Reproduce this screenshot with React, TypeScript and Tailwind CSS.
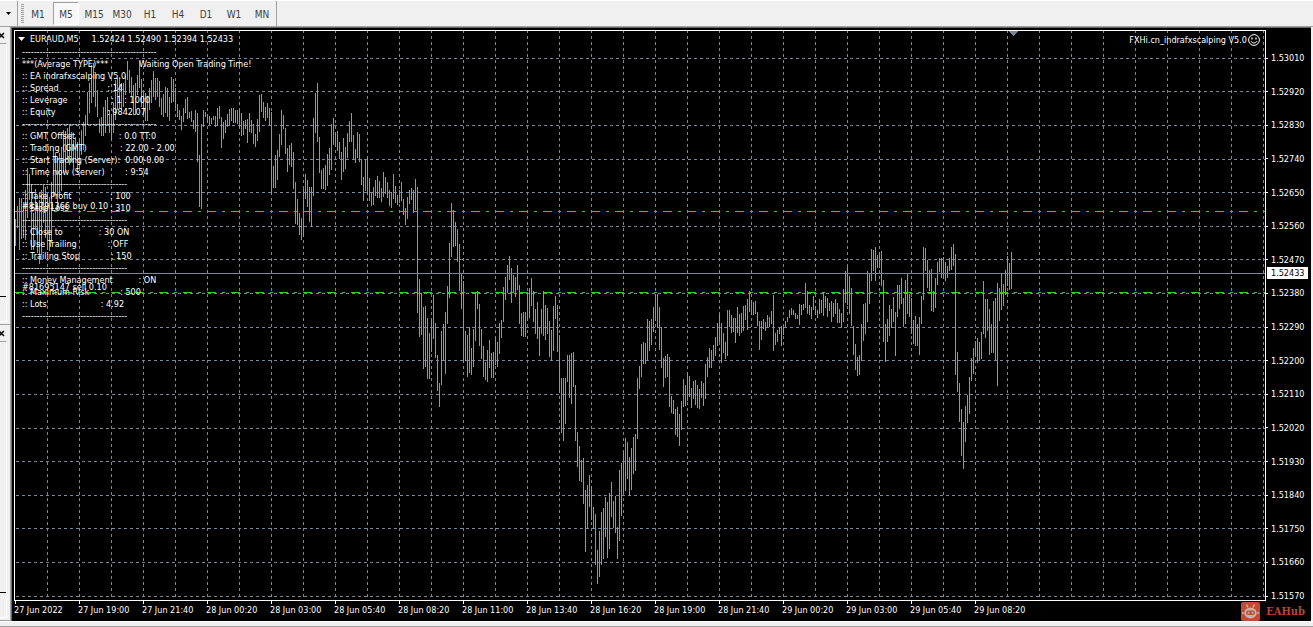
import React from 'react';

const TIMEFRAMES = ['M1', 'M5', 'M15', 'M30', 'H1', 'H4', 'D1', 'W1', 'MN'];

const PRICES = [
  '1.53010', '1.52920', '1.52830', '1.52740', '1.52650', '1.52560', '1.52470', '1.52380', '1.52290',
  '1.52200', '1.52110', '1.52020', '1.51930', '1.51840', '1.51750', '1.51660', '1.51570',
];

const TIMES = [
  '27 Jun 2022', '27 Jun 19:00', '27 Jun 21:40', '28 Jun 00:20', '28 Jun 03:00', '28 Jun 05:40',
  '28 Jun 08:20', '28 Jun 11:00', '28 Jun 13:40', '28 Jun 16:20', '28 Jun 19:00', '28 Jun 21:40',
  '29 Jun 00:20', '29 Jun 03:00', '29 Jun 05:40', '29 Jun 08:20',
];

const LONG_RULE = '-'.repeat(46);
const SHORT_RULE = '-'.repeat(36);

const COMMENT = [
  LONG_RULE,
  '***(Average TYPE)***            Waiting Open Trading Time!',
  ':: EA indrafxscalping V5.0',
  ':: Spread                   : 14',
  ':: Leverage                 : 1 : 1000',
  ':: Equity                    : 9842.07',
  LONG_RULE,
  ':: GMT Offset                 : 0.0 TT:0',
  ':: Trading (GMT)             : 22.00 - 2.00',
  ':: Start Trading (Server):  0.00-0.00',
  ':: Time now (Server)        : 9:54',
  SHORT_RULE,
  ':: Take Profit               : 100',
  ':: Stop Loss                : 310',
  SHORT_RULE,
  ':: Close to              : 30 ON',
  ':: Use Trailing            : OFF',
  ':: Trailing Stop            : 150',
  SHORT_RULE,
  ':: Money Management          : ON',
  ':: Maximum Risk            : 500',
  ':: Lots                     : 4.92',
  SHORT_RULE,
];

// high/low of every bar, one bar each two pixels
const BARS = `
219-246 206-228 198-250 198-239 202-238 190-240 168-218 174-200 184-250 213-250 189-230 203-253 200-264 190-255
185-223 187-238 193-250 197-251 182-243 150-196 153-195 157-210 153-196 147-191 130-173 131-170 128-160 125-165
132-162 140-168 137-160 142-173 138-168 130-155 122-150 115-136 92-125 83-113 65-103 63-97 72-107 90-117
119-133 117-136 107-136 100-133 97-125 110-133 115-141 103-133 80-120 78-110 77-108 83-110 83-107 75-95
61-80 70-93 77-96 85-115 83-115 75-95 61-88 79-107 90-115 93-121 97-121 88-110 80-103 71-97
78-100 78-97 81-107 98-115 94-117 87-113 88-117 97-121 77-103 79-102 88-108 104-117 110-120 116-130
108-122 99-113 97-119 112-118 111-122 120-129 110-132 113-162 155-207 124-209 110-127 112-117 114-123 116-125
118-124 116-120 116-127 108-126 106-119 117-148 122-139 120-133 114-127 109-126 108-121 108-123 110-123 110-124
109-128 113-136 121-135 120-129 119-143 113-132 120-133 124-144 134-147 119-141 95-132 94-112 102-118 107-121
103-118 108-125 112-195 166-188 155-188 150-180 134-157 110-145 115-129 128-154 148-172 145-165 143-167 152-189
182-224 199-225 213-235 218-240 189-237 174-199 180-207 187-222 187-227 118-196 93-133 83-142 137-173 170-189
168-189 165-190 154-186 148-175 124-170 118-145 132-147 131-151 142-159 152-180 138-172 147-169 133-158 121-142
113-142 135-160 149-163 132-158 134-162 159-185 177-201 160-191 157-195 178-201 192-206 187-205 180-196 176-198
181-198 188-202 172-197 177-194 182-198 190-206 192-208 174-199 186-203 195-205 190-203 182-201 199-215 208-225
197-219 190-204 188-200 190-213 179-210 187-313 279-337 293-335 307-369 306-367 318-379 333-379 319-352 295-339
323-358 355-391 383-407 331-385 324-361 312-374 286-324 243-298 203-257 210-247 222-246 229-262 244-291 274-309
281-363 331-361 335-377 327-373 348-375 329-367 293-341 291-309 304-346 329-359 346-377 362-380 350-382 340-368
353-378 352-378 337-365 342-367 323-354 320-338 287-322 277-300 265-293 256-280 268-303 275-293 277-297 265-290
285-324 313-336 312-337 312-337 293-321 288-318 278-306 291-322 309-334 302-339 327-356 309-334 291-336 305-340
308-334 321-357 330-361 306-351 296-319 305-352 335-393 378-433 378-441 378-424 355-382 355-398 353-404 352-387
385-441 432-467 446-481 460-482 458-504 490-552 485-529 475-507 486-520 507-529 514-565 550-584 531-577 512-565
508-559 497-537 502-558 493-549 482-517 501-528 496-533 527-559 470-541 463-516 451-493 438-491 442-479 457-496
448-490 437-474 434-471 378-439 366-389 344-377 342-364 343-364 319-361 321-351 319-345 307-332 294-321 294-328
307-350 327-368 358-387 356-378 354-377 357-407 396-413 400-414 409-435 407-437 414-446 401-430 379-407 385-406
372-401 376-397 388-408 381-399 380-405 385-408 389-409 381-398 383-406 364-399 357-377 348-368 350-368 345-360
337-356 323-346 314-342 323-363 333-353 342-359 310-356 310-327 315-333 318-332 318-343 307-333 314-336 313-333
306-331 305-320 299-330 291-312 300-315 302-315 301-314 312-326 321-350 321-340 319-329 322-331 315-327 317-327
311-324 295-351 333-345 330-342 328-334 326-346 327-335 321-327 317-322 310-318 308-315 310-315 313-319 315-319
304-325 305-315 304-310 283-308 291-314 305-315 307-319 296-310 306-315 310-318 299-314 300-313 293-316 296-308
298-317 303-311 301-322 303-317 299-314 303-323 309-323 313-328 289-322 271-303 267-305 276-314 288-326 326-355
344-370 357-376 355-375 324-361 304-341 303-334 271-322 274-304 249-281 250-271 247-281 255-268 252-268 251-286
280-342 324-362 319-342 305-336 309-328 297-322 312-356 285-317 285-309 278-304 298-327 280-324 274-314 294-317
298-334 320-344 316-346 324-346 317-355 296-324 247-300 248-271 260-288 270-291 269-311 291-312 278-308 262-285
258-272 258-278 257-279 262-281 266-278 258-271 247-270 244-266 254-375 352-392 383-422 409-456 422-469 406-442
395-423 377-414 358-381 348-374 341-355 338-363 342-361 332-359 281-334 299-338 299-331 309-355 324-353 301-353
298-361 283-386 288-321 273-310 284-306 270-295 256-286 263-290 252-289
`.trim().split(/\s+/).map((bar) => bar.split('-').map(Number));

const Toolbar = () => (
  <header className="flex h-[27px] border-t border-b border-t-white border-b-[#a0a0a0] bg-[#f0f0f0]">
    <button aria-label="More" className="flex w-[18px] items-center justify-center border-r border-[#a0a0a0]">
      <svg width="5" height="3" viewBox="0 0 5 3"><path d="M0 0h5L2.5 3z" fill="#000" /></svg>
    </button>
    <nav className="flex items-center border-r border-[#a0a0a0]">
      <span className="ml-[3px] h-5 w-[3px] bg-[repeating-linear-gradient(#a0a0a0_0_1px,#f0f0f0_1px_2px)]" />
      {TIMEFRAMES.map((tf) => (
        <button
          key={tf}
          className={
            tf === 'M5'
              ? 'mx-px h-[23px] w-[26px] border border-t-[#a0a0a0] border-l-[#a0a0a0] border-r-white border-b-white bg-[#f8f8f8] pt-[2px] text-[10px] text-[#404040]'
              : 'h-[23px] w-7 pt-[2px] text-[10px] text-[#404040]'
          }
        >
          {tf}
        </button>
      ))}
    </nav>
  </header>
);

const DockPanel = ({ className }: { className: string }) => (
  <section className={`flex flex-col border-b border-[#a0a0a0] ${className}`}>
    <button aria-label="Close" className="flex h-4 w-[7px] items-center">
      <svg width="5" height="7" viewBox="0 0 5 7"><path d="M-1 1L4 6M-1 6L4 1" stroke="#000" strokeWidth="1.5" /></svg>
    </button>
    <div className="mr-[3px] mb-[2px] flex flex-1 flex-col justify-end border-t border-r border-b border-t-[#a0a0a0] border-r-white border-b-white pb-6">
      <span className="h-px w-[6px] bg-black" />
    </div>
  </section>
);

const Plot = () => (
  <svg className="absolute inset-0 size-full" shapeRendering="crispEdges" aria-hidden="true">
    <g transform="translate(-15 -31)">
      <g stroke="#778899" strokeDasharray="3 3">
        {Array.from({ length: 90 }, (_, i) => (
          <line key={i} x1={47.5 + i * 32} x2={47.5 + i * 32} y1="30" y2="597" />
        ))}
        {PRICES.map((price, i) => {
          const y = Math.floor(58.3 + i * 33.61) + 0.5;
          return <line key={price} x1="16" x2="3000" y1={y} y2={y} />;
        })}
      </g>
      <path d={BARS.map(([high, low], i) => `M${15.5 + i * 2} ${high}V${low}`).join('')} stroke="#00ff00" fill="none" />
      <path d="M15 273.5H3000" stroke="#778899" />
      <path d="M15 211.5H3000M15 292.5H3000" stroke="#32cd32" strokeDasharray="9 6 3 6" />
      <path d="M1008 31h10l-5 5z" fill="#778899" />
    </g>
  </svg>
);

const Smiley = () => (
  <svg width="12" height="12" viewBox="0 0 12 12" fill="none" stroke="#fff">
    <circle cx="6" cy="6" r="5.4" />
    <path d="M3 7.2C4 9.6 8 9.6 9 7.2" />
    <path d="M4 3.5v2M8 3.5v2" strokeWidth="1.3" />
  </svg>
);

const Watermark = () => (
  <div className="absolute right-[6px] bottom-0 flex items-center gap-[6px]">
    <svg width="19" height="19" viewBox="0 0 19 19">
      <rect width="19" height="19" rx="2" fill="#c24b32" />
      <path d="M5.5 2.5L7 5.5M13.5 2.5L12 5.5" stroke="#c2b5b1" strokeWidth="1.4" />
      <ellipse cx="9.5" cy="11" rx="6.2" ry="5.4" fill="#c2b5b1" />
      <path d="M2 10v2M17 10v2" stroke="#c2b5b1" strokeWidth="1.4" />
      <rect x="5" y="8.5" width="9" height="4.6" rx="2.3" fill="#c24b32" />
      <circle cx="7.5" cy="10.8" r="1" fill="#c2b5b1" />
      <circle cx="11.5" cy="10.8" r="1" fill="#c2b5b1" />
    </svg>
    <span className="font-['DejaVu_Serif_Condensed','DejaVu_Serif',serif] text-[11px] leading-4 font-bold text-[#b5472f]">EAHub</span>
  </div>
);

const Chart = () => (
  <main className="relative mr-[2px] flex min-w-0 flex-1 flex-col border-t border-l border-[#696969] bg-black pt-[2px] pl-[2px] text-white">
    <div className="flex flex-1">
      <div className="relative min-w-0 flex-1 overflow-hidden border border-white">
        <Plot />
        <div className="relative flex justify-between pt-[2px] pr-[5px] pl-[3px]">
          <div className="flex h-3 items-center gap-[5px] whitespace-pre">
            <svg width="7" height="4" viewBox="0 0 7 4"><path d="M0 0h7L3.5 4z" fill="#fff" /></svg>
            <h1>EURAUD,M5     1.52424 1.52490 1.52394 1.52433</h1>
          </div>
          <div className="flex h-[14px] items-center gap-px">
            <span>FXHi.cn_indrafxscalping V5.0</span>
            <Smiley />
          </div>
        </div>
        <pre className="absolute top-[15px] left-[7px] font-[inherit]">{COMMENT.join('\n')}</pre>
        <span className="absolute top-[169px] left-[7px]">#81791366 buy 0.10</span>
        <span className="absolute top-[250px] left-[7px]">#81695147 sell 0.10</span>
      </div>
      <div className="relative -mb-px flex w-[45px] flex-col justify-between pt-[22px]">
        {PRICES.map((price) => (
          <div key={price} className="flex h-3 items-center gap-[3px]">
            <span className="h-px w-[2px] bg-white" />
            {price}
          </div>
        ))}
        <div className="absolute top-[237px] right-0 left-px mr-[3px] h-3 bg-white pl-1 text-black">1.52433</div>
      </div>
    </div>
    <div className="flex h-5 overflow-hidden">
      {TIMES.map((time) => (
        <div key={time} className="w-16 shrink-0 whitespace-nowrap">
          <div className="ml-px h-[3px] w-px bg-white" />
          {time}
        </div>
      ))}
    </div>
    <Watermark />
  </main>
);

export default function App() {
  return (
    <div className="flex min-h-screen flex-col bg-[#f0f0f0] font-['DejaVu_Sans_Condensed','DejaVu_Sans',sans-serif] text-[9px] leading-3">
      <Toolbar />
      <div className="flex flex-1">
        <aside className="flex w-[11px] flex-col border-r border-[#a0a0a0]">
          <DockPanel className="h-[298px]" />
          <DockPanel className="flex-1" />
        </aside>
        <Chart />
      </div>
      <footer className="h-[6px] border-t border-b border-t-white border-b-[#a0a0a0]" />
    </div>
  );
}
